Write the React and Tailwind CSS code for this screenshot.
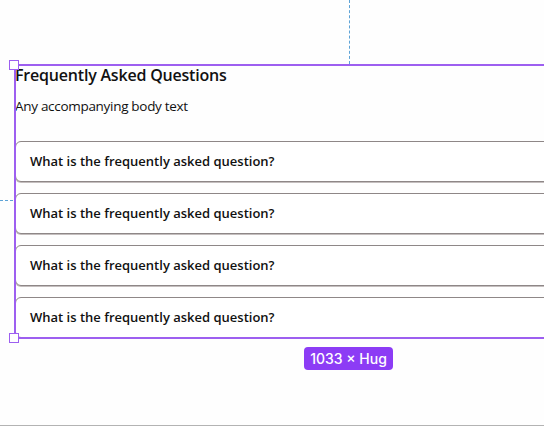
const questions = [
  'What is the frequently asked question?',
  'What is the frequently asked question?',
  'What is the frequently asked question?',
  'What is the frequently asked question?',
];

const App = () => {
  return (
    <div className="relative w-[544px] h-[426px] overflow-hidden bg-[#fefefe] border-b border-[#b3b3b3] font-['Open_Sans',sans-serif] text-[#111]">
      {/* Selected frame */}
      <div className="relative ml-[15px] mt-[65px] w-[1033px] outline-2 -outline-offset-1 outline-[#9d5ff0]">
        <h2 className="text-[16px] leading-[20px] font-semibold tracking-[-0.2px]">Frequently Asked Questions</h2>
        <p className="mt-[11px] text-[13.5px] leading-[20px] tracking-[-0.3px]">Any accompanying body text</p>

        <div className="mt-[25px] flex flex-col gap-[11px]">
          {questions.map((q, i) => (
            <div
              key={i}
              className="h-[41px] flex items-center pl-[14px] rounded-[6px] border border-[#8e8787] shadow-[0_1px_0_#c4bebe] bg-white"
            >
              <span className="text-[13px] font-semibold">{q}</span>
            </div>
          ))}
        </div>

        {/* Handles */}
        <div className="absolute -left-[6px] -top-[5px] w-[10px] h-[10px] bg-white border border-[#9d5ff0]" />
        <div className="absolute -left-[6px] -bottom-[5px] w-[10px] h-[10px] bg-white border border-[#9d5ff0]" />
      </div>

      {/* Figma guides */}
      <div className="absolute left-[349px] top-0 h-[64px] border-l border-dashed border-[#5ea3d6]" />
      <div className="absolute left-0 top-[200px] w-[13px] border-t border-dashed border-[#5ea3d6]" />

      {/* Size badge */}
      <div className="absolute left-[304px] top-[347px] h-[23px] w-[89px] rounded-[4px] bg-[#8c3cf5] flex items-center justify-center text-white text-[14px] font-medium font-['Inter',sans-serif]">
        1033 × Hug
      </div>
    </div>
  );
};

export default App;
